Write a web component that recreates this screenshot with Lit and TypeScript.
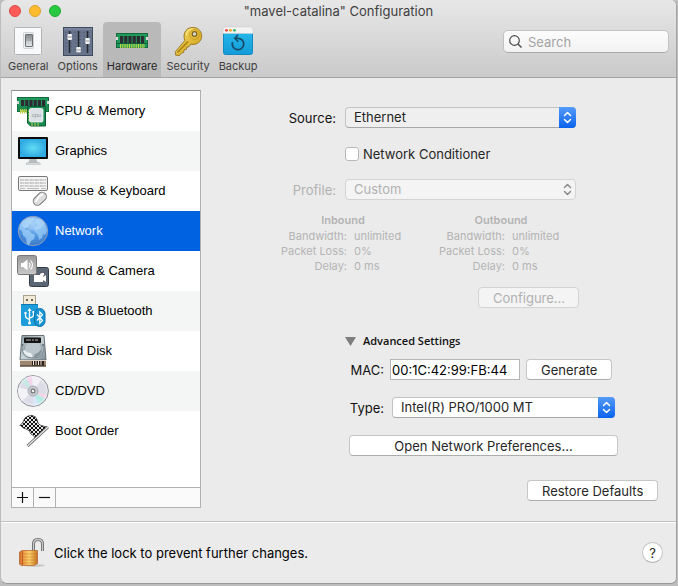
import { LitElement, html, css, svg, nothing } from "lit";
import { customElement, property, state } from "lit/decorators.js";
import { classMap } from "lit/directives/class-map.js";

const range = (n: number) => Array.from({ length: n }, (_, i) => i);

const ram = svg`
  <rect x="0.5" y="8.5" width="31" height="14" fill="#1e9a5b" stroke="#156b3f"/>
  <rect x="0" y="12" width="2" height="3" fill="#d9d9d9"/><rect x="30" y="12" width="2" height="3" fill="#d9d9d9"/>
  <rect x="1" y="18" width="30" height="1" fill="#0d5c34"/>
  ${range(6).map((i) => svg`<rect x=${4 + i * 4.2} y="11" width="3.2" height="7" fill="#2c2b33"/>`)}
  ${range(14).map((i) => svg`<rect x=${4 + i * 1.8} y="19" width="1" height="4" fill="#b9d94a"/>`)}`;

const icons: Record<string, unknown> = {
  general: svg`
    <defs><linearGradient id="g" x2="0" y2="1"><stop stop-color="#85898c"/><stop offset=".5" stop-color="#a9adaf"/><stop offset=".52" stop-color="#c3c6c8"/><stop offset="1" stop-color="#e3e5e6"/></linearGradient></defs>
    <rect x="2.5" y="2.5" width="27" height="27" rx="1" fill="#f7f9fa" stroke="#b2b4b5"/>
    <rect x="11.500" y="7.500" width="10" height="16" rx="1" fill="#e9ebec" stroke="#d0d2d3"/>
    <rect x="13.500" y="9.500" width="7" height="12" rx=".5" fill="url(#g)" stroke="#6d7174"/>`,
  options: svg`
    <rect x="1.500" y="2.500" width="29" height="28" fill="#68748b" stroke="#414b5e"/>
    <path d="M2 4h28" stroke="#8792a8"/>
    ${[4, 9.500, 13, 18, 22, 27].map((x) => svg`<path d="M${x} 7v21" stroke="#4c566b" stroke-dasharray="1 2.500"/>`)}
    <path d="M7.500 6v22M16.500 6v22M25.500 6v22" stroke="#23272f" stroke-width="1.500"/>
    <rect x="5.500" y="9" width="4.500" height="6" rx="1" fill="#f1f2f3"/><path d="M5.500 12h4.500" stroke="#999"/>
    <rect x="14.300" y="22" width="4.500" height="5.500" rx="1" fill="#f1f2f3"/><path d="M14.300 25h4.500" stroke="#999"/>
    <rect x="23.300" y="13" width="4.500" height="6" rx="1" fill="#f1f2f3"/><path d="M23.300 16h4.500" stroke="#999"/>`,
  hardware: ram,
  security: svg`
    <defs><linearGradient id="k" x2="1" y2="1"><stop stop-color="#fae16a"/><stop offset="1" stop-color="#c99810"/></linearGradient></defs>
    <path d="M12.800 15.500C10.500 9.500 13.500 3.500 19 2.600c5.500-.9 10.500 2.400 10.700 8 .2 6-5 9.800-10.800 8.600l-2 2.600-2 .2-.6 2.400-2.200.4-.4 2.600-2.200.6-2 2.500-3.800-.3-.3-3.500z" fill="url(#k)" stroke="#8d6a10" stroke-width=".8"/>
    <path d="M5.500 27.500 16 16.500" stroke="#a67c10" stroke-width="1.400"/>
    <path d="M14.500 10c0-3.500 3-6.300 6.300-6" stroke="#fff3a0" fill="none"/>
    <circle cx="22.500" cy="9.500" r="4.800" fill="none" stroke="#c4961a" stroke-width=".8"/>
    <circle cx="22.500" cy="9" r="2.300" fill="#d5d5d5" stroke="#80651b" stroke-width="1.200"/>`,
  backup: svg`
    <defs><linearGradient id="b" x2="0" y2="1"><stop stop-color="#28bdec"/><stop offset="1" stop-color="#149bd9"/></linearGradient></defs>
    <rect x="1.500" y="2.500" width="29" height="27" rx="2" fill="url(#b)" stroke="#168ac2"/>
    <path d="M1 8.500V4q0-2 2-2h26q2 0 2 2v4.500z" fill="#f3f3f3" stroke="#c9c9c9" stroke-width=".5"/>
    <circle cx="4.500" cy="5.300" r="1.400" fill="#ef4136"/><circle cx="8.500" cy="5.300" r="1.400" fill="#f5a623"/><circle cx="12.500" cy="5.300" r="1.400" fill="#35b56a"/>
    <path d="M10.600 17.200A5.700 5.700 0 1 0 16 13.300H13.500" fill="none" stroke="#174b68" stroke-width="1.800"/>
    <path d="M16 9.800 12.800 13.300 16.300 16.800" fill="none" stroke="#174b68" stroke-width="1.600"/>`,
  cpu: svg`
    <g transform="translate(0 -6)">${ram}</g>
    <rect x="0.500" y="11" width="31" height="4" fill="#1c8a51"/>
    ${range(14).map((i) => svg`<rect x=${3 + i * 1.900} y="14" width="1.100" height="4.500" fill="#b9c94a"/>`)}
    <path d="M10.500 11.500h18v19.500h-15l-3-3z" fill="#178a50" stroke="#0c5b35"/>
    <path d="M15 28v3M18 28v3M21 28v3M11 16h2M11 19h2M11 22h2M11 25h2" stroke="#c8cf4c"/>
    <rect x="12.500" y="13.500" width="13.500" height="13.500" rx="1.500" fill="#dbe1e4" stroke="#f6f8f9" stroke-width=".8"/>
    <text x="15" y="22" font-family="Liberation Sans" font-size="5.500" fill="#8f9699">cpu</text>`,
  graphics: svg`
    <defs><radialGradient id="m"><stop stop-color="#62dcf4"/><stop offset="1" stop-color="#30abe2"/></radialGradient></defs>
    <path d="M12.500 24h7l1 4.500h-9z" fill="#b9bec1"/><path d="M10.500 27.500h11.500l1.500 1.700H9z" fill="#eceeef" stroke="#a4a9ac" stroke-width=".7"/>
    <rect x="1" y="2" width="30" height="22" rx="1" fill="#0b0b0b"/><rect x="3" y="4" width="26" height="18" fill="url(#m)"/>`,
  mouse: svg`
    <rect x="1.500" y="1.500" width="29" height="14" rx="1.500" fill="#f4f4f4" stroke="#777"/>
    <path d="M3 5h26M3 8h26M3 11h26" stroke="#a2a2a2" stroke-width="2" stroke-dasharray="1.700 .8"/>
    <path d="M3 5h26M3 8h26M3 11h26" stroke="#fff" stroke-width="1" stroke-dasharray="1.300 1.200" stroke-dashoffset="-.2"/>
    <path d="M3 13.500h5M10 13.500h12M24 13.500h5" stroke="#bbb"/>
    <rect x="18.500" y="16.500" width="8.500" height="15" rx="4.200" fill="#dedede" stroke="#777" transform="rotate(46 23 24)"/>
    <path d="M19 27q2-6 7-8" stroke="#fff" fill="none" stroke-width="1.500"/>`,
  network: svg`
    <defs><radialGradient id="n" cx=".5" cy=".25" r=".8"><stop stop-color="#8fc6f6"/><stop offset=".6" stop-color="#4f93e0"/><stop offset="1" stop-color="#3474c2"/></radialGradient></defs>
    <circle cx="16" cy="16" r="14.700" fill="url(#n)" stroke="#8f9fbd"/>
    <path d="M3 10Q6 5 11 3l6 0 1 2-3 1 0 2-3 1-1 3-3 1 1 2 3 0 2 3 4 2-1 4-3 2-2 4-2-1-1-6-3-3-1-4-3-2z" fill="#9ed0f8" opacity=".75"/>
    <path d="M19 4l4 0 4 3 2 4 1 5-2 4-2-1-1 4-3 2-1-5-2-2-2-3 1-3 3-1-1-2-2-1z" fill="#9ed0f8" opacity=".7"/>
    <ellipse cx="16" cy="8.500" rx="11.500" ry="6.500" fill="#fff" opacity=".2"/>`,
  sound: svg`
    <defs><linearGradient id="s" x2="0" y2="1"><stop stop-color="#999"/><stop offset="1" stop-color="#c9c9c9"/></linearGradient></defs>
    <rect x="12.500" y="12.500" width="19" height="19" rx="2" fill="#5b6574" stroke="#343c49"/>
    <path d="M17 20h6v-1l2-1h2v2l-1 1v1l3-2v7l-3-2v2h-9z" fill="#fff"/>
    <rect x=".5" y=".5" width="19" height="19" rx="2" fill="url(#s)" stroke="#777"/>
    <path d="M4 8h2l4.500-3.500v11L6 12H4z" fill="#fff"/>
    <path d="M12 7.500q2 2.500 0 5M13.500 5.500q4 4.500 0 9" fill="none" stroke="#fff" stroke-width="1.100"/>`,
  usb: svg`
    <rect x="6.500" y=".5" width="12" height="10" fill="#f2ead8" stroke="#aaa08c"/>
    <rect x="9" y="4" width="2" height="2" fill="#6f6656"/><rect x="14" y="4" width="2" height="2" fill="#6f6656"/>
    <path d="M4 9h17v22H6q-2 0-2-2z" fill="#1c9cdb"/><path d="M4 9.500h17" stroke="#0e78ae"/>
    <path d="M12.500 14v14M8.500 18v3q0 2 4 3.500M16.500 17v3q0 2-4 3" stroke="#fff" fill="none" stroke-width="1.300"/>
    <path d="M10.500 16l2-3 2 3z" fill="#fff"/><circle cx="12.500" cy="28" r="1.500" fill="#fff"/><circle cx="8.500" cy="18" r="1.200" fill="#fff"/><rect x="15.500" y="16" width="2" height="2" fill="#fff"/>
    <rect x="17.500" y="13.500" width="10.500" height="18" rx="5.200" fill="#1593d2" stroke="#0d74ac"/>
    <path d="M20 19.500l5.500 6-2.700 2.800V17l2.700 2.700-5.500 5.800" stroke="#fff" fill="none" stroke-width="1.200"/>`,
  disk: svg`
    <defs><linearGradient id="d" x2="1" y2="1"><stop stop-color="#8f9da4"/><stop offset=".5" stop-color="#c9d3d7"/><stop offset="1" stop-color="#7f8d94"/></linearGradient></defs>
    <path d="M5 .5h22l2 24.500H3z" fill="url(#d)" stroke="#657178"/>
    <path d="M5 11q-1 12 11 12t11-12" fill="#a7b4ba" stroke="#7d8a91"/>
    <circle cx="16" cy="13" r="8.500" fill="#b9c5ca" stroke="#98a5ab"/>
    <path d="M6 16q3 7 10 6l-2-4q-4 0-6-3z" fill="#e8eef0"/><path d="M25 16q-2 6-8 6l1-3q4-1 5-4z" fill="#84949c"/>
    <rect x="7" y="2.500" width="17" height="5.500" rx=".8" fill="#141414"/><path d="M9 5h12" stroke="#b5babd" stroke-dasharray="5 1 2 1"/>
    <circle cx="5.500" cy="10" r="1" fill="#58656c"/><circle cx="26" cy="10" r="1" fill="#58656c"/>
    <rect x="3" y="25" width="26" height="6.500" fill="#9c8870"/><path d="M3 25.500h26" stroke="#dfd5c7"/><rect x="3" y="30.500" width="26" height="1" fill="#3c3128"/>
    <rect x="15" y="26" width="12" height="4.500" fill="#2b211a"/><path d="M16.500 26v4M19 26v4M21.500 26v4M24 26v4" stroke="#efe5d6"/>`,
  disc: svg`
    <circle cx="16" cy="16" r="15.400" fill="#dcdde6" stroke="#929299"/>
    <path d="M16 16 9 2.500A15 15 0 0 1 15 1z" fill="#f5d5ec"/><path d="M16 16 4 7a15 15 0 0 1 5-4.500z" fill="#c6e9e3"/>
    <path d="M16 16 15 1a15 15 0 0 1 10 3z" fill="#f3f1f7"/><path d="M16 16 22 29.500a15 15 0 0 1-6 1.300z" fill="#d8e8fa"/>
    <path d="M16 16 28 24a15 15 0 0 1-6 5.500z" fill="#b4eee3"/><path d="M16 16 30 20a15 15 0 0 1-2 4z" fill="#f4d6e8"/>
    <path d="M16 16 1.500 12.500A15 15 0 0 0 5 26z" fill="#f2f2f7"/>
    <circle cx="16" cy="16" r="14" fill="none" stroke="#f1f1f6" stroke-width=".8"/>
    <circle cx="16" cy="16" r="5" fill="#c9cad1" stroke="#aaaab4"/><circle cx="16" cy="16" r="1.900" fill="#f5f5f5" stroke="#777" stroke-width="1.200"/>`,
  boot: svg`
    <defs><pattern id="c" width="4" height="4" patternUnits="userSpaceOnUse"><rect width="4" height="4" fill="#111"/><path d="M0 0h2v2H0zM2 2h2v2H2z" fill="#e4e4e4"/></pattern></defs>
    <path d="M3 10.500Q6 8 8 3q3-3 7-2.500 4 .5 5 4 .5 5 4 6l6 1.500-12 11q-1-3-4-4-1-4-5-5-3-.5-6-4z" fill="url(#c)" stroke="#222" stroke-width=".7"/>
    <path d="M31 12 10.500 31" stroke="#555" stroke-width="2.800"/><path d="M31 12 10.500 31" stroke="#eee" stroke-width="1.200"/>`,
  lock: svg`
    <defs><linearGradient id="l" x2="1" y2="0"><stop stop-color="#d5702c"/><stop offset=".25" stop-color="#efa04a"/><stop offset=".55" stop-color="#fbd06a"/><stop offset="1" stop-color="#c87422"/></linearGradient></defs>
    <ellipse cx="19" cy="28.500" rx="10" ry="1.500" fill="#999" opacity=".4"/>
    <path d="M17.500 15V7Q17.500 2.500 22 2.500T26.500 7V14" fill="none" stroke="#666" stroke-width="3"/>
    <path d="M17.500 15V7Q17.500 2.500 22 2.500T26.500 7V14" fill="none" stroke="#ccc" stroke-width="1.300"/>
    <path d="M3.500 15 6 13.500h15.500v13L18 28.500H5L3.500 27z" fill="url(#l)" stroke="#b0602a" stroke-width=".7"/>
    <path d="M4 17h17M4 20h17M4 23h17M4 26h17" stroke="#a94e12" opacity=".35" stroke-width=".8"/>
    <path d="M6.500 14v14" stroke="#a83e10" opacity=".5"/>`,
};

const base = css`
  * { box-sizing: border-box; }
  button, input, select { font: inherit; color: inherit; margin: 0; padding: 0; }
`;

@customElement("pictured-icon")
class PicturedIcon extends LitElement {
  @property() name = "";
  static styles = css`
    :host { display: block; width: 32px; height: 32px; flex: none; }
    .art { display: block; width: 100%; height: 100%; }
  `;
  render() {
    return html`<svg class="art" viewBox="0 0 32 32" aria-hidden="true">${icons[this.name]}</svg>`;
  }
}

@customElement("popup-menu")
class PopupMenu extends LitElement {
  @property() label = "";
  @property({ type: Array }) options: string[] = [];
  @property({ type: Boolean, reflect: true }) disabled = false;
  static styles = [base, css`
    :host { display: grid; height: 21px; }
    .list {
      grid-area: 1 / 1; appearance: none; width: 100%; height: 21px; padding: 0 24px 2px 8px;
      border: 1px solid #c3c3c3; border-bottom-color: #a8a8a8; border-radius: 4px;
      background: var(--menu-fill, #fff); color: #262626; outline: none;
    }
    .list:disabled { background: #f4f4f4; color: #b1b1b1; border-color: #d3d3d3; opacity: 1; }
    .knob {
      grid-area: 1 / 1; justify-self: end; width: 17px; height: 21px; pointer-events: none;
      border-radius: 0 4px 4px 0; background: linear-gradient(#549bf8, #0a62ee);
      fill: none; stroke: #fff; stroke-width: 1.5; stroke-linecap: round; stroke-linejoin: round;
    }
    :host([disabled]) .knob { background: none; stroke: #8a8a8a; }
  `];
  render() {
    return html`
      <select class="list" aria-label=${this.label} ?disabled=${this.disabled}>
        ${this.options.map((o) => html`<option>${o}</option>`)}
      </select>
      <svg class="knob" viewBox="0 0 17 21" aria-hidden="true"><path d="M5.500 8.500 8.500 5.500 11.500 8.500M5.500 12.500 8.500 15.500 11.500 12.500"/></svg>`;
  }
}

const tabs = [["general", "General"], ["options", "Options"], ["hardware", "Hardware"], ["security", "Security"], ["backup", "Backup"]];
const devices = [
  ["cpu", "CPU & Memory"], ["graphics", "Graphics"], ["mouse", "Mouse & Keyboard"], ["network", "Network"],
  ["sound", "Sound & Camera"], ["usb", "USB & Bluetooth"], ["disk", "Hard Disk"], ["disc", "CD/DVD"], ["boot", "Boot Order"],
];
const limits = [["Bandwidth:", "unlimited"], ["Packet Loss:", "0%"], ["Delay:", "0 ms"]];

@customElement("app-root")
class AppRoot extends LitElement {
  @state() private tab = "hardware";
  @state() private device = "network";

  static styles = [base, css`
    :host {
      display: block; min-height: 100vh; padding: 0 1px 2px; box-sizing: border-box;
      background: #bdbdbd; color: #111; font: 13px/16px Inter, "Liberation Sans", sans-serif;
    }
    .window {
      display: flex; flex-direction: column; min-height: calc(100vh - 2px); overflow: hidden;
      border-right: 1px solid #a3a3a3; border-bottom: 1px solid #989898; border-radius: 6px; background: #ebebeb;
    }
    .head { background: linear-gradient(#e7e7e7, #cacaca); border-bottom: 1px solid #a5a5a5; }
    .titlebar { display: grid; grid-template-columns: 1fr auto 1fr; align-items: center; height: 22px; padding: 0 8px; }
    .title { margin: 0; font-size: 13px; font-weight: 400; line-height: 16px; color: #3f3f3f; }
    .lights { display: flex; gap: 8px; }
    .light { width: 12px; height: 12px; border-radius: 50%; border: 1px solid #df4a43; background: #fc5b57; }
    .light.min { background: #fdbc2e; border-color: #df9f27; }
    .light.max { background: #28c940; border-color: #20ab31; }
    .toolbar { display: flex; align-items: flex-start; justify-content: space-between; padding: 0 7px 0 3px; }
    .tabs { display: flex; gap: 1px; }
    .tab {
      display: flex; flex-direction: column; align-items: center; gap: 2px; min-width: 46px; height: 55px; padding: 3px 4px;
      border: 0; border-radius: 4px 4px 0 0; background: none; font-size: 11px; line-height: 14px; color: #3f3f3f;
    }
    .tab.on { background: #b9b9b9; color: #262626; }
    .search {
      display: flex; align-items: center; gap: 6px; width: 166px; height: 23px; margin-top: 8px; padding: 0 5px;
      border: 1px solid #c2c2c2; border-bottom-color: #a9a9a9; border-radius: 5px; background: linear-gradient(#fcfcfc, #f2f2f2);
    }
    .lens { width: 13px; height: 13px; flex: none; fill: none; stroke: #4b4b4b; stroke-width: 1.2; }
    .query { flex: 1; min-width: 0; border: 0; background: none; outline: none; }
    .query::placeholder { color: #a4a4a4; opacity: 1; }

    .body { flex: 1; display: flex; padding: 12px 18px 13px 10px; }
    .side { display: flex; flex-direction: column; flex: none; width: 190px; border: 1px solid #b1b1b1; border-top-color: #8e8e8e; background: #fff; }
    .devices { flex: 1; margin: 0; padding: 0; list-style: none; }
    .device {
      display: flex; align-items: center; gap: 6px; width: 100%; height: 40px; padding: 0 5px;
      border: 0; background: none; font-family: "Liberation Sans", sans-serif; text-align: left; color: #000;
    }
    .devices li:nth-child(even) { background: #f4f5f5; }
    .device.on { background: #0062e1; color: #fff; }
    .edit { display: flex; height: 20px; border-top: 1px solid #b1b1b1; background: #fafafa; }
    .step { width: 22px; border: 0; border-right: 1px solid #b1b1b1; background: none; display: grid; place-items: center; }
    .step svg { width: 13px; height: 13px; stroke: #111; stroke-width: 1.2; }

    .pane { flex: 1; display: flex; flex-direction: column; padding: 17px 0 7px 80px; }
    .form { display: grid; grid-template-columns: 55px 231px; column-gap: 9px; align-items: center; }
    .form.top { row-gap: 20px; }
    .cap { text-align: right; white-space: nowrap; color: #111; }
    .dim { color: #b1b1b1; }
    .grey { --menu-fill: #efefef; }
    .check { grid-column: 2; display: flex; align-items: center; gap: 4px; height: 11px; color: #262626; }
    .tick { appearance: none; width: 14px; height: 14px; border: 1px solid #b7b7b7; border-radius: 3px; background: #fff; }
    .flows { display: flex; gap: 20px; margin-top: 13px; font-size: 11px; line-height: 15px; color: #b4b4b4; }
    .flow { width: 138px; border-spacing: 0; }
    .flow caption { padding-bottom: 1px; width: 124px; font-weight: 600; }
    .flow th { width: 67px; padding: 0 7px 0 0; font-weight: 400; text-align: right; white-space: nowrap; }
    .flow td { padding: 0; white-space: nowrap; }
    .btn {
      height: 21px; padding: 0 14px; border: 1px solid #c6c6c6; border-bottom-color: #adadad; border-radius: 4px;
      background: #fff; color: #262626; white-space: nowrap;
    }
    .btn:disabled { background: #f4f4f4; border-color: #d3d3d3; color: #b1b1b1; }
    .configure { width: 101px; margin: 13px 0 0 197px; }
    .adv { margin: 24px 0 0 64px; }
    .adv > summary {
      display: flex; align-items: center; gap: 7px; height: 18px; list-style: none;
      font: 600 11px/18px "Open Sans", "Noto Sans", sans-serif; color: #111;
    }
    .tri { width: 11px; height: 9px; fill: #7e7e7e; }
    .line { display: grid; grid-template-columns: 39px auto auto; justify-content: start; align-items: center; }
    .line.mac { column-gap: 6px; margin-top: 9px; }
    .line.type { grid-template-columns: 39px 223px; column-gap: 8px; margin-top: 17px; }
    .mac-box { width: 130px; height: 21px; padding: 0 1px; border: 1px solid #b6b6b6; background: #fff; color: #000; }
    .generate { width: 86px; }
    .prefs { display: block; width: 269px; margin: 17px 0 0 4px; }
    .restore { align-self: flex-end; width: 131px; margin-top: auto; }

    .foot { display: flex; align-items: center; gap: 6px; height: 62px; padding: 0 13px 0 15px; border-top: 1px solid #c1c1c1; box-shadow: inset 0 1px #fff; }
    .note { flex: 1; margin: 0; color: #000; }
    .lock { border: 0; background: none; }
    .help { width: 21px; height: 21px; border: 1px solid #c6c6c6; border-bottom-color: #adadad; border-radius: 50%; background: #fff; color: #262626; }
  `];

  private flow(name: string) {
    return html`<table class="flow"><caption>${name}</caption><tbody>
      ${limits.map(([k, v]) => html`<tr><th scope="row">${k}</th><td>${v}</td></tr>`)}
    </tbody></table>`;
  }

  render() {
    return html`
      <div class="window">
        <header class="head">
          <div class="titlebar">
            <div class="lights"><span class="light"></span><span class="light min"></span><span class="light max"></span></div>
            <h1 class="title">"mavel-catalina" Configuration</h1>
          </div>
          <div class="toolbar">
            <nav class="tabs">
              ${tabs.map(([id, label]) => html`
                <button class=${classMap({ tab: true, on: this.tab === id })} aria-current=${this.tab === id ? "page" : nothing}
                  @click=${() => (this.tab = id)}><pictured-icon name=${id}></pictured-icon>${label}</button>`)}
            </nav>
            <label class="search">
              <svg class="lens" viewBox="0 0 13 13" aria-hidden="true"><circle cx="5.500" cy="5.500" r="4.800"/><path d="M9 9l3.500 3.500" stroke-width="1.500"/></svg>
              <input class="query" type="search" placeholder="Search" aria-label="Search">
            </label>
          </div>
        </header>
        <div class="body">
          <aside class="side">
            <ul class="devices">
              ${devices.map(([id, label]) => html`<li>
                <button class=${classMap({ device: true, on: this.device === id })} @click=${() => (this.device = id)}>
                  <pictured-icon name=${id}></pictured-icon>${label}</button></li>`)}
            </ul>
            <div class="edit">
              <button class="step" aria-label="Add"><svg viewBox="0 0 13 13"><path d="M1 6.500h11M6.500 1v11"/></svg></button>
              <button class="step" aria-label="Remove"><svg viewBox="0 0 13 13"><path d="M1 6.500h11"/></svg></button>
            </div>
          </aside>
          <main class="pane">
            <div class="form top">
              <span class="cap">Source:</span>
              <popup-menu class="grey" label="Source" .options=${["Ethernet"]}></popup-menu>
              <label class="check"><input class="tick" type="checkbox">Network Conditioner</label>
              <span class="cap dim">Profile:</span>
              <popup-menu label="Profile" disabled .options=${["Custom"]}></popup-menu>
            </div>
            <div class="flows">${this.flow("Inbound")}${this.flow("Outbound")}</div>
            <button class="btn configure" disabled>Configure...</button>
            <details class="adv" open>
              <summary><svg class="tri" viewBox="0 0 11 9" aria-hidden="true"><path d="M0 0h11L5.500 9z"/></svg>Advanced Settings</summary>
              <div class="line mac">
                <label class="cap" for="mac">MAC:</label>
                <input class="mac-box" id="mac" value="00:1C:42:99:FB:44">
                <button class="btn generate">Generate</button>
              </div>
              <div class="line type">
                <span class="cap">Type:</span>
                <popup-menu label="Type" .options=${["Intel(R) PRO/1000 MT"]}></popup-menu>
              </div>
              <button class="btn prefs">Open Network Preferences...</button>
            </details>
            <button class="btn restore">Restore Defaults</button>
          </main>
        </div>
        <footer class="foot">
          <button class="lock" aria-label="Lock"><pictured-icon name="lock"></pictured-icon></button>
          <p class="note">Click the lock to prevent further changes.</p>
          <button class="help" aria-label="Help">?</button>
        </footer>
      </div>`;
  }
}
